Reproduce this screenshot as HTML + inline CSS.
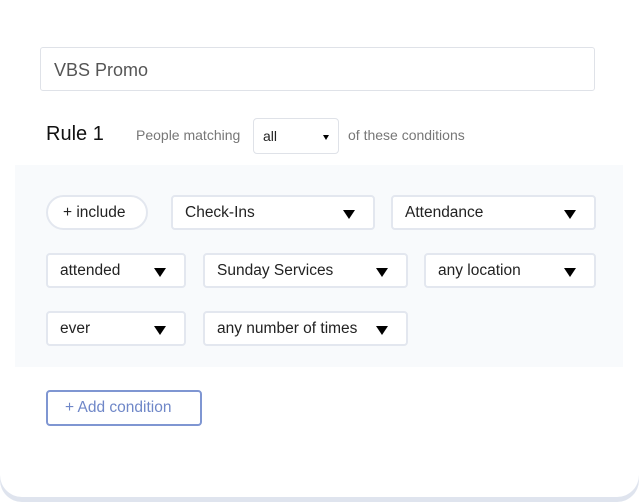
<!DOCTYPE html>
<html><head><meta charset="utf-8"><style>
*{box-sizing:border-box;margin:0;padding:0}
html,body{width:639px;height:504px;background:#fff;overflow:hidden;font-family:"Liberation Sans",sans-serif}
.card{position:absolute;left:0;top:0;width:639px;height:497px;background:#fff;border-radius:0 0 22px 22px;box-shadow:0 5px 0 #dfe4ee}
.abs{position:absolute}
.input{left:40px;top:47px;width:555px;height:44px;border:1px solid #dfe2e8;border-radius:3px;font-size:18px;color:#555;padding:12px 0 0 13px}
.rule{left:46px;top:123px;font-size:20px;color:#111}
.gray{font-size:14px;color:#777}
.sel{border:2px solid #e3e7ef;border-radius:4px;background:#fff;font-size:15.5px;color:#222;padding-left:12px;display:flex;align-items:center}
.sel .t{position:absolute;right:18px;top:13px;width:0;height:0;border-left:6.5px solid transparent;border-right:6.5px solid transparent;border-top:9px solid #000}
.panel{left:15px;top:165px;width:608px;height:202px;background:#f8fafc}
</style></head><body>
<div class="card"></div>
<div class="abs input">VBS Promo</div>
<div class="abs rule">Rule 1</div>
<div class="abs gray" style="left:136px;top:127px">People matching</div>
<div class="abs sel" style="left:253px;top:118px;width:86px;height:36px;border:1px solid #dfe2e8;font-size:14px;padding-left:9px">all<span style="position:absolute;right:9px;top:16px;border-left:3.5px solid transparent;border-right:3.5px solid transparent;border-top:5px solid #000"></span></div>
<div class="abs gray" style="left:348px;top:127px">of these conditions</div>
<div class="abs panel"></div>
<div class="abs sel" style="left:46px;top:195px;width:102px;height:35px;border-radius:18px;padding-left:15px">+ include</div>
<div class="abs sel" style="left:171px;top:195px;width:204px;height:35px">Check-Ins<span class="t"></span></div>
<div class="abs sel" style="left:391px;top:195px;width:205px;height:35px">Attendance<span class="t"></span></div>
<div class="abs sel" style="left:46px;top:253px;width:140px;height:35px">attended<span class="t"></span></div>
<div class="abs sel" style="left:203px;top:253px;width:205px;height:35px">Sunday Services<span class="t"></span></div>
<div class="abs sel" style="left:424px;top:253px;width:172px;height:35px">any location<span class="t"></span></div>
<div class="abs sel" style="left:46px;top:311px;width:140px;height:35px">ever<span class="t"></span></div>
<div class="abs sel" style="left:203px;top:311px;width:205px;height:35px">any number of times<span class="t"></span></div>
<div class="abs" style="left:46px;top:390px;width:156px;height:36px;border:2px solid #7f96d2;border-radius:4px;color:#6f87c8;font-size:15.5px;padding:7px 0 0 17px">+ Add condition</div>
</body></html>
